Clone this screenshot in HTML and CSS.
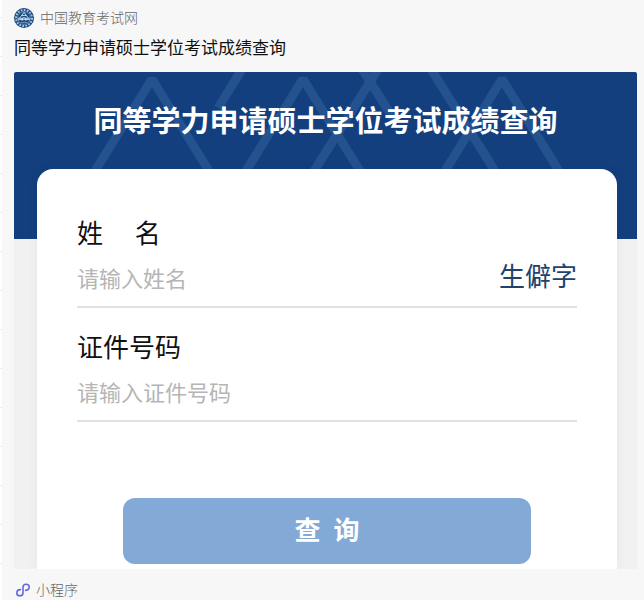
FILE: index.html
```
<!DOCTYPE html>
<html lang="zh-CN">
<head>
<meta charset="UTF-8" />
<meta name="viewport" content="width=device-width, initial-scale=1" />
<title>同等学力申请硕士学位考试成绩查询</title>
<link rel="stylesheet" href="styles.css">
</head>
<body>
  <div class="share">
    <header class="source">
      <svg class="source-logo" viewBox="0 0 20 20" aria-hidden="true">
        <circle cx="10" cy="10" r="10" fill="#16477f" />
        <circle cx="10" cy="10" r="8" fill="none" stroke="#a9c3dd" stroke-width="2" stroke-dasharray="1.8 1.3" />
        <circle cx="10" cy="10" r="6.4" fill="#16477f" stroke="#7fa3c9" stroke-width="0.7" />
        <path d="M10 4.2 6.4 9.2M10 4.2l3.6 5M7.8 7.4h4.4" fill="none" stroke="#c5d8ea" stroke-width="1" />
        <path d="M4.8 12.4V10h2.4v2.4M8.6 12.6V9.8h2.8v2.8M12.8 12.4V10h2.4v2.4M5 11.2h10" fill="none" stroke="#e4eef7" stroke-width="0.9" />
        <path d="M6.6 14.4h6.8" stroke="#8fb0d2" stroke-width="0.8" />
      </svg>
      <span>中国教育考试网</span>
    </header>
    <h1 class="share-title">同等学力申请硕士学位考试成绩查询</h1>

    <main class="preview">
      <div class="banner">
        <svg class="banner-lines" viewBox="0 0 623 167" preserveAspectRatio="xMidYMin slice" aria-hidden="true">
          <g fill="none" stroke="#23528f" stroke-width="9" stroke-linejoin="bevel">
            <path d="M76 107 138 7l62 100" />
            <path d="M230-6 204 36" />
            <path d="M227 107 289 7l62 100" />
            <path d="M295 107 366-6M346-6l35 55" />
            <path d="M415-6l71 113" />
            <path d="M426 107 488 7l62 100" />
          </g>
        </svg>
        <h2 class="banner-title">同等学力申请硕士学位考试成绩查询</h2>
      </div>

      <form class="card">
        <div class="field">
          <label for="name">姓&emsp; 名</label>
          <div class="field-row">
            <input type="text" id="name" placeholder="请输入姓名" />
            <button type="button" class="rare">生僻字</button>
          </div>
        </div>
        <div class="field">
          <label for="idno">证件号码</label>
          <div class="field-row">
            <input type="text" id="idno" placeholder="请输入证件号码" />
          </div>
        </div>
        <button type="submit" class="submit">查&ensp;询</button>
      </form>
    </main>

    <footer class="mini">
      <svg class="mini-icon" viewBox="0 0 16 16" aria-hidden="true">
        <path d="M5.4 7.6C3.2 7.7 1.8 9 1.8 10.9c0 1.700 1.300 2.900 3 2.900 1.900 0 3.200-1.300 3.200-3.100V5.300C8 3.500 9.300 2.200 11.200 2.200c1.700 0 3 1.200 3 2.900 0 1.900-1.400 3.200-3.600 3.300" fill="none" stroke="#6467e0" stroke-width="1.600" stroke-linecap="round" />
      </svg>
      <span>小程序</span>
    </footer>
  </div>
</body>
</html>
```
FILE: styles.css
```
* {
  box-sizing: border-box;
}
body {
  margin: 0;
  padding-left: 2px;
  font-family: "Noto Sans CJK SC", sans-serif;
  /* row lines of the list behind the card */
  background: repeating-linear-gradient(#fff 0 38px, #ececec 38px 39px) 0 -21px;
}
.share {
  padding: 8px 7px 0 12px;
  background-color: #f7f7f7;
}
.source {
  display: flex;
  align-items: center;
  gap: 6px;
  height: 20px;
  font-size: 14px;
  font-weight: 300;
  line-height: 18px;
  color: #666;
}
.source span {
  padding-bottom: 2px;
}
.source-logo {
  width: 20px;
  height: 20px;
}
.share-title {
  margin: 7px 0 13px;
  font-size: 17px;
  font-weight: 400;
  line-height: 24px;
  color: #111;
}
.preview {
  overflow: hidden;
  border-radius: 2px 2px 0 0;
  background-color: #f1f1f1;
}
.banner {
  position: relative;
  padding: 27px 0 100px;
  background-color: #133f7e;
}
.banner-lines {
  position: absolute;
  inset: 0;
  width: 100%;
  height: 100%;
}
.banner-title {
  position: relative;
  margin: 0;
  font-size: 29px;
  font-weight: 700;
  line-height: 40px;
  text-align: center;
  white-space: nowrap;
  color: #fff;
}
.card {
  position: relative;
  margin: -70px 20px 0 23px;
  padding: 45px 40px 5px;
  border-radius: 16px 16px 0 0;
  background-color: #fff;
  box-shadow: 0 0 12px rgba(0, 0, 0, 0.05);
}
.field {
  margin-bottom: 20px;
}
.field label {
  display: block;
  font-size: 26px;
  line-height: 36px;
  color: #111;
}
.field-row {
  display: flex;
  align-items: center;
  height: 58px;
  padding-bottom: 6px;
  border-bottom: 2px solid #e2e2e2;
}
.field-row input {
  flex: 1;
  min-width: 0;
  padding: 4px 0 0;
  border: none;
  outline: none;
  background: none;
  font-family: inherit;
  font-size: 22px;
  color: #111;
}
.field-row input::placeholder {
  color: #b5b5b5;
}
.rare {
  padding: 0;
  border: none;
  background: none;
  font-family: inherit;
  font-size: 26px;
  line-height: 36px;
  color: #21436b;
  cursor: pointer;
}
.submit {
  display: block;
  width: calc(100% - 92px);
  height: 66px;
  margin: 76px auto 0;
  padding: 0 0 6px;
  border: none;
  border-radius: 12px;
  background-color: #83a9d7;
  font-family: inherit;
  font-size: 26px;
  font-weight: 700;
  color: #fff;
  cursor: pointer;
}
.mini {
  display: flex;
  align-items: center;
  gap: 5px;
  padding: 11px 0 0 1px;
  font-size: 14px;
  font-weight: 300;
  line-height: 18px;
  color: #666;
}
.mini span {
  padding-bottom: 2px;
}
.mini-icon {
  width: 16px;
  height: 16px;
}
```
